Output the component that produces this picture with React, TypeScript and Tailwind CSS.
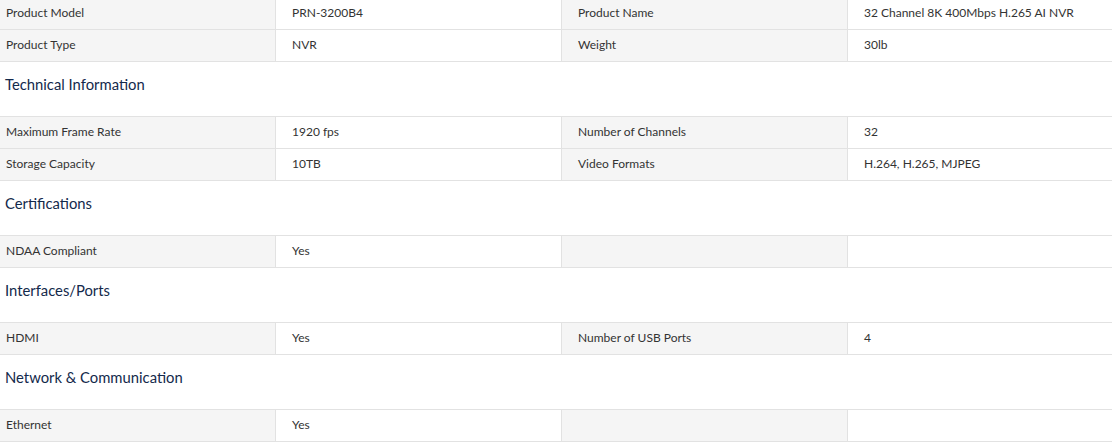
import type { ReactElement } from 'react';

type Spec = [string, string];

interface Section {
  title?: string;
  rows: [Spec, Spec | null][];
}

const sections: Section[] = [
  {
    rows: [
      [["Product Model", "PRN-3200B4"], ["Product Name", "32 Channel 8K 400Mbps H.265 AI NVR"]],
      [["Product Type", "NVR"], ["Weight", "30lb"]],
    ],
  },
  {
    title: "Technical Information",
    rows: [
      [["Maximum Frame Rate", "1920 fps"], ["Number of Channels", "32"]],
      [["Storage Capacity", "10TB"], ["Video Formats", "H.264, H.265, MJPEG"]],
    ],
  },
  {
    title: "Certifications",
    rows: [[["NDAA Compliant", "Yes"], null]],
  },
  {
    title: "Interfaces/Ports",
    rows: [[["HDMI", "Yes"], ["Number of USB Ports", "4"]]],
  },
  {
    title: "Network & Communication",
    rows: [[["Ethernet", "Yes"], null]],
  },
];

const CELL = "h-[31px] flex items-center pb-[2px] text-[12px] text-[#333]";

function Row({ left, right }: { left: Spec; right: Spec | null }): ReactElement {
  return (
    <div className="grid grid-cols-[276px_286px_286px_1fr] border-b border-[#e2e2e2]">
      <div className={`${CELL} bg-[#f5f5f5] pl-[6px] border-r border-[#e2e2e2]`}>{left[0]}</div>
      <div className={`${CELL} pl-[16px] border-r border-[#e2e2e2]`}>{left[1]}</div>
      <div className={`${CELL} bg-[#f5f5f5] pl-[16px] border-r border-[#e2e2e2]`}>{right ? right[0] : ""}</div>
      <div className={`${CELL} pl-[16px]`}>{right ? right[1] : ""}</div>
    </div>
  );
}

export default function App() {
  return (
    <div className="w-[1112px] h-[442px] overflow-hidden bg-white font-['Lato','Open_Sans',sans-serif]">
      <div className="-mt-[3px]">
        {sections.map((section, i) => (
          <div key={i}>
            {section.title && (
              <div className="h-[54px] pt-[12px] pl-[5px]">
                <h3 className="text-[14.8px] leading-[20px] text-[#13294b]">{section.title}</h3>
              </div>
            )}
            <div className="border-t border-[#e2e2e2]">
              {section.rows.map(([l, r], j) => (
                <Row key={j} left={l} right={r} />
              ))}
            </div>
          </div>
        ))}
      </div>
    </div>
  );
}
